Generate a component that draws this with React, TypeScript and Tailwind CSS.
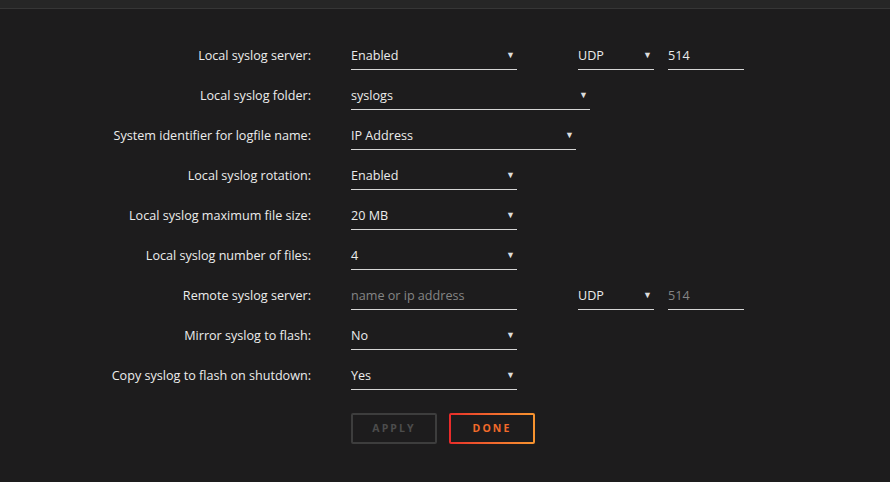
import React from 'react';

type Field = { value: string; width: string; kind: 'select' | 'input'; muted?: boolean };

const ROWS: { label: string; main: Field; proto?: boolean; port?: { value: string; muted?: boolean } }[] = [
  { label: 'Local syslog server:', main: { value: 'Enabled', width: 'w-[166px]', kind: 'select' }, proto: true, port: { value: '514' } },
  { label: 'Local syslog folder:', main: { value: 'syslogs', width: 'w-[239px]', kind: 'select' } },
  { label: 'System identifier for logfile name:', main: { value: 'IP Address', width: 'w-[225px]', kind: 'select' } },
  { label: 'Local syslog rotation:', main: { value: 'Enabled', width: 'w-[166px]', kind: 'select' } },
  { label: 'Local syslog maximum file size:', main: { value: '20 MB', width: 'w-[166px]', kind: 'select' } },
  { label: 'Local syslog number of files:', main: { value: '4', width: 'w-[166px]', kind: 'select' } },
  { label: 'Remote syslog server:', main: { value: 'name or ip address', width: 'w-[166px]', kind: 'input', muted: true }, proto: true, port: { value: '514', muted: true } },
  { label: 'Mirror syslog to flash:', main: { value: 'No', width: 'w-[166px]', kind: 'select' } },
  { label: 'Copy syslog to flash on shutdown:', main: { value: 'Yes', width: 'w-[166px]', kind: 'select' } },
];

const Caret = () => <span className="text-[9px] leading-none text-[#dcdcdc] pr-[2px] pb-[5px]">▼</span>;

const Box: React.FC<{ f: Field }> = ({ f }) => (
  <div className={`${f.width} h-[30px] pt-[4px] flex items-center justify-between border-b border-[#d6d6d6]`}>
    <span className={f.muted ? 'text-[#858585]' : 'text-[#ececec]'}>{f.value}</span>
    {f.kind === 'select' && <Caret />}
  </div>
);

export default function App() {
  return (
    <div className="w-[890px] h-[482px] bg-[#1d1c1d] text-[12.6px] overflow-hidden" style={{ fontFamily: '"Open Sans", "Liberation Sans", sans-serif' }}>
      <div className="h-[8px] bg-[#262626] border-b border-[#363636] box-content"></div>

      <div className="pt-[26px] flex flex-col">
        {ROWS.map((r) => (
          <div key={r.label} className="h-10 flex items-center">
            <div className="w-[311px] pt-[2px] text-right text-[#ececec]">{r.label}</div>
            <div className="ml-10 flex items-center">
              <Box f={r.main} />
              {r.proto && (
                <div className="ml-[61px]">
                  <Box f={{ value: 'UDP', width: 'w-[76px]', kind: 'select' }} />
                </div>
              )}
              {r.port && (
                <div className="ml-[14px]">
                  <Box f={{ value: r.port.value, width: 'w-[76px]', kind: 'input', muted: r.port.muted }} />
                </div>
              )}
            </div>
          </div>
        ))}

        <div className="mt-[18px] ml-[351px] flex gap-3">
          <button className="w-[86px] h-[31px] pt-[1px] rounded-[2px] border-2 border-[#3d3d3d] text-[#4c4c4c] text-[10.5px] font-bold tracking-[0.2em]">
            APPLY
          </button>
          <div className="w-[86px] h-[31px] rounded-[2px] p-[2px] bg-gradient-to-r from-[#e8292a] to-[#f7942f]">
            <button className="w-full h-full pt-[1px] bg-[#1d1c1d] text-[#f26a2a] text-[10.5px] font-bold tracking-[0.2em]">
              DONE
            </button>
          </div>
        </div>
      </div>
    </div>
  );
}
